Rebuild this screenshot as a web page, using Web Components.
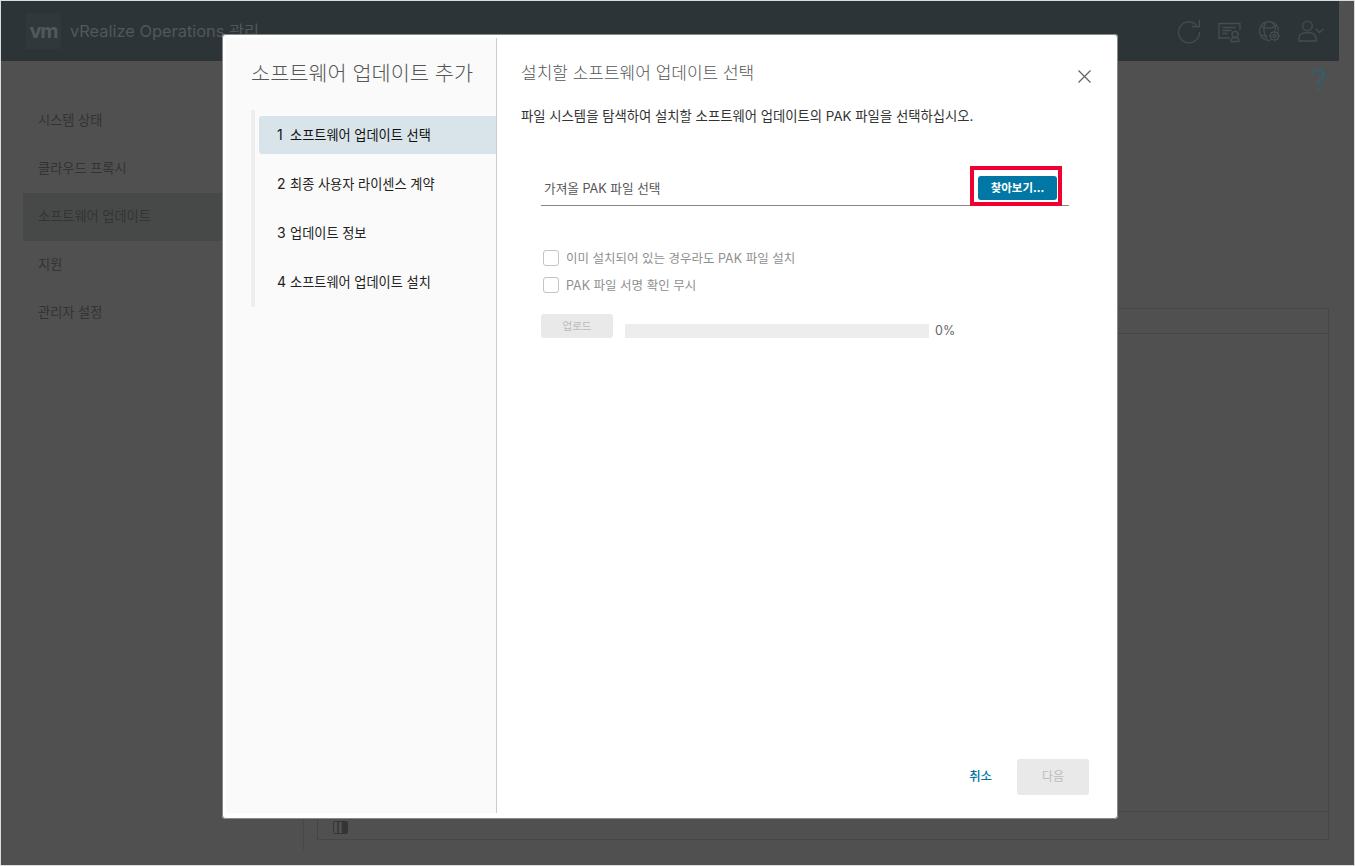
<!DOCTYPE html>
<html lang="ko"><head><meta charset="utf-8"><title>vRealize Operations 관리</title>
<style>
html,body{margin:0;padding:0;background:#fff}
body{font-family:"Inter","Noto Sans CJK KR",sans-serif}
</style></head><body>
<vr-app>
  <vr-header slot="header" title-text="vRealize Operations 관리"></vr-header>
  <vr-sidebar slot="side">
    <vr-nav>시스템 상태</vr-nav><vr-nav>클라우드 프록시</vr-nav><vr-nav active>소프트웨어 업데이트</vr-nav><vr-nav>지원</vr-nav><vr-nav>관리자 설정</vr-nav>
  </vr-sidebar>
  <vr-content slot="main"></vr-content>
  <vr-wizard slot="overlay" heading="소프트웨어 업데이트 추가" subheading="설치할 소프트웨어 업데이트 선택">
    <vr-step slot="steps" n="1" active>소프트웨어 업데이트 선택</vr-step>
    <vr-step slot="steps" n="2">최종 사용자 라이센스 계약</vr-step>
    <vr-step slot="steps" n="3">업데이트 정보</vr-step>
    <vr-step slot="steps" n="4">소프트웨어 업데이트 설치</vr-step>
    <vr-upload></vr-upload>
  </vr-wizard>
</vr-app>
<script>
const FONT='"Inter","Noto Sans CJK KR",sans-serif';
const KR='"Noto Sans CJK KR","Inter",sans-serif';
function def(name,css,html,init){
  customElements.define(name,class extends HTMLElement{
    constructor(){super();const r=this.attachShadow({mode:'open'});r.innerHTML='<style>'+css+'</style>'+html;}
    connectedCallback(){if(init)init(this,this.shadowRoot);}
  });
}
def('vr-app',`
:host{display:block;position:relative;box-sizing:border-box;width:1355px;height:866px;border:1px solid #dcdcdc;background:#505050;overflow:hidden;font-family:${KR}}
.shell{width:1338px;height:864px;display:grid;grid-template-rows:60px 1fr}
.body{display:grid;grid-template-columns:302px 1fr;min-height:0}
.overlay{position:absolute;inset:0;padding:33px 0 0 221px;box-sizing:border-box}
`,`<div class="shell"><slot name="header"></slot><div class="body"><slot name="side"></slot><slot name="main"></slot></div></div><div class="overlay"><slot name="overlay"></slot></div>`);

def('vr-header',`
:host{display:flex;align-items:center;background:#2d3437;height:60px;padding-left:25px;color:#53575a}
.logo{width:35px;height:36px;background:#31383b;display:flex;align-items:center;justify-content:center;color:#55585a;font:700 20px/1 ${FONT};letter-spacing:-1.2px;margin-right:9px}
.t{font:400 16.400px/1 ${FONT};white-space:nowrap}
.icons{margin-left:auto;display:flex;align-items:center;padding-right:13px}
svg{display:block;fill:none;stroke:#474c4f;stroke-width:1.300}
`,`<div class="logo">vm</div><div class="t" id="t"></div>
<div class="icons">
<svg width="26" height="26" viewBox="0 0 26 26" style="margin-right:14px"><path d="M20.500 7A10.500 10.500 0 1 0 23.500 14"/><path d="M23.500 1.500v7H16"/></svg>
<svg width="26" height="26" viewBox="0 0 26 26" style="margin-right:17px"><path d="M14 20H3V5.500h21V12"/><path d="M6.500 9.500h13M6.500 12.500h9M6.500 15.500h5"/><circle cx="19" cy="16.500" r="3"/><path d="M15 23.500c0-3 1.500-4 4-4s4 1 4 4z"/></svg>
<svg width="26" height="26" viewBox="0 0 26 26" style="margin-right:13px"><circle cx="10" cy="13" r="9.500"/><path d="M2 8c4 3 12 3 16-1M7 4c-3 5-3 11 1 18M12 4c4 3 5 7 4 10M2 17c2 1 4 1 6 1"/><circle cx="15.500" cy="18" r="6" fill="#2d3437" stroke="none"/><circle cx="15.500" cy="18" r="4"/><circle cx="15.500" cy="18" r="1.500"/><path d="M15.500 12.500V14M15.500 22v1.500M10 18h1.500M19.500 18H21M11.600 14.100l1.100 1.100M18.300 20.800l1.100 1.100M11.600 21.900l1.100-1.100M18.300 15.200l1.100-1.100"/></svg>
<svg width="28" height="26" viewBox="0 0 28 26"><circle cx="9.500" cy="8" r="4.800"/><path d="M1 23v-3c0-3 3-5.500 8.500-5.500S18 17 18 20v3z"/><path d="M18 11l3.500 3.500 4-3.500"/></svg>
</div>`,(h,r)=>{r.getElementById('t').textContent=h.getAttribute('title-text')});

def('vr-sidebar',`
:host{display:flex;flex-direction:column;padding:36px 0 0 22px;box-sizing:border-box}
`,`<slot></slot>`);
def('vr-nav',`
:host{display:flex;align-items:center;box-sizing:border-box;height:48px;padding:0 0 2px 15px;color:#333;font:400 13.200px/1 ${KR};white-space:nowrap}
:host([active]){background:#474949}
`,`<slot></slot>`);

def('vr-content',`
:host{display:flex;flex-direction:column;box-sizing:border-box;border-left:1px solid #474747;margin-bottom:15px;padding:0 10px 0 13px;min-width:0}
.help{align-self:flex-end;margin:4px 0 0;font:300 30px/30px ${FONT};color:#2f5f73;height:30px;padding-right:2px}
.table{margin-top:213px;flex:1;border:1px solid #464646;display:grid;grid-template-rows:24px 1fr 28px;margin-bottom:10px}
.table>div+div{border-top:1px solid #464646}
.foot{padding:9px 15px}
.foot svg{display:block;stroke:#353535;fill:none}
`,`<div class="help">?</div>
<div class="table"><div></div><div></div><div class="foot"><svg width="15" height="13" viewBox="0 0 15 13"><rect x=".5" y=".5" width="14" height="12" rx="1"/><path d="M5 .5v12M9.500 .5v12" stroke-width="1.500"/><rect x="10" y="1" width="4" height="11" fill="#353535" stroke="none"/></svg></div></div>`);

def('vr-wizard',`
:host{display:block;box-sizing:border-box;width:896px;height:785px;background:#fff;border-radius:4px;box-shadow:0 0 0 1px #8a8a8a inset;padding:4px 1px 6px 4px;font-family:${KR}}
.w{display:grid;grid-template-columns:271px 1fr;height:100%}
.l{background:#fafafa;border-right:1px solid #ccc;padding:0 0 0 25px;min-width:0}
.l h2{margin:0;padding-top:18px;height:54px;box-sizing:border-box;font:300 20.800px/32px ${KR};color:#565656;white-space:nowrap}
.rail{margin:18px 0 0;border-left:4px solid #eee;padding:6px 0 6px 4px;display:flex;flex-direction:column;gap:11px}
.r{position:relative;padding:0 28px 18px 24px;display:flex;flex-direction:column;min-width:0}
.r h3{margin:0;padding-top:21px;height:54px;box-sizing:border-box;font:300 17px/26px ${KR};color:#565656;white-space:nowrap}
.x{position:absolute;right:25px;top:31px;width:15px;height:15px;display:block;stroke:#666;fill:none;stroke-width:1.300}
::slotted(vr-upload){flex:1}
`,`<div class="w"><div class="l"><h2 id="h"></h2><div class="rail"><slot name="steps"></slot></div></div>
<div class="r"><h3 id="s"></h3><svg class="x" viewBox="0 0 15 15"><path d="M1.500 1.500l12 12M13.500 1.500l-12 12"/></svg><slot></slot></div></div>`,
(h,r)=>{r.getElementById('h').textContent=h.getAttribute('heading');r.getElementById('s').textContent=h.getAttribute('subheading')});

def('vr-step',`
:host{display:flex;align-items:center;height:38px;box-sizing:border-box;padding-left:18px;border-radius:3px 0 0 3px;color:#222;font:400 13.200px/1 ${KR};white-space:nowrap}
:host([active]){background:#d9e4ea;color:#111}
.n{width:13px;font-family:${FONT};font-size:14px}
`,`<span class="n" id="n"></span><slot></slot>`,(h,r)=>{r.getElementById('n').textContent=h.getAttribute('n')});

def('vr-check',`
:host{display:flex;align-items:center;height:27px;color:#8f8f8f;font:400 12.500px/1 ${FONT};white-space:nowrap;padding-left:2px}
i{display:block;width:14px;height:14px;border:1px solid #c4c4c4;border-radius:3px;background:#fff;margin:0 7px 3px 0;flex:none}
`,`<i></i><slot></slot>`);

def('vr-btn',`
:host{display:flex;align-items:center;justify-content:center;box-sizing:border-box;border-radius:3px;font:700 11.500px/1 ${KR};white-space:nowrap}
:host([primary]){background:#0077a5;color:#fff}
:host([disabled]){background:#e9e9e9;color:#bbb;font-weight:400}
:host([link]){color:#00749f;font-weight:500;font-size:12.400px;padding-bottom:2px}
`,`<slot></slot>`);

def('vr-upload',`
:host{display:flex;flex-direction:column;font-family:${KR}}
p{margin:14px 0 0;font:400 13.350px/20px ${FONT};color:#333;height:20px;white-space:nowrap}
.file{margin:40px 0 0 20px;width:528px;height:40px;box-sizing:border-box;border-bottom:1px solid #888;display:flex;align-items:flex-start}
.file span{padding:14px 0 0 3px;font:400 12.650px/18px ${FONT};color:#565656}
.hl{margin-left:auto;margin-right:7px;box-sizing:border-box;width:92px;height:40px;border:4px solid #ee0030;padding:6px 1px 2px 4px}
.hl vr-btn{height:24px}
.opts{margin:40px 0 0 20px}
.up{margin:14px 0 0 20px;display:flex;align-items:flex-end;height:24px}
.up vr-btn{width:72px;height:24px;font-size:10.500px}
.bar{margin-left:12px;width:304px;height:14px;background:#ededed}
.pc{margin-left:6px;font:400 12.500px/14px ${FONT};color:#666}
.foot{margin-top:auto;display:flex;align-items:center;justify-content:flex-end;gap:25px}
.foot vr-btn[disabled]{width:72px;height:36px;font-size:12px;padding-bottom:2px}
`,`<p>파일 시스템을 탐색하여 설치할 소프트웨어 업데이트의 PAK 파일을 선택하십시오.</p>
<div class="file"><span>가져올 PAK 파일 선택</span><div class="hl"><vr-btn primary>찾아보기...</vr-btn></div></div>
<div class="opts"><vr-check>이미 설치되어 있는 경우라도 PAK 파일 설치</vr-check><vr-check>PAK 파일 서명 확인 무시</vr-check></div>
<div class="up"><vr-btn disabled>업로드</vr-btn><div class="bar"></div><span class="pc">0%</span></div>
<div class="foot"><vr-btn link>취소</vr-btn><vr-btn disabled>다음</vr-btn></div>`);
</script>
</body></html>
